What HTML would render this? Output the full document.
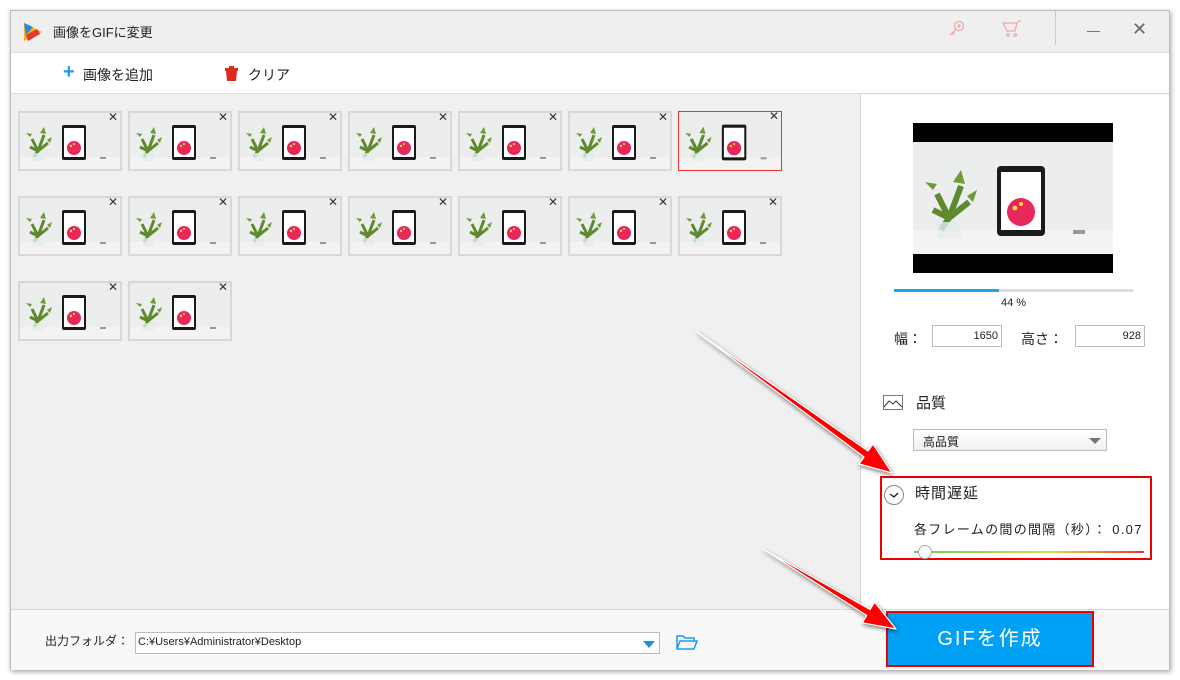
<!DOCTYPE html>
<html><head><meta charset="utf-8"><style>
*{margin:0;padding:0;box-sizing:border-box}
body{width:1180px;height:680px;background:#fff;position:relative;overflow:hidden;font-family:"Liberation Sans","Noto Sans CJK JP",sans-serif;color:#222}
.win{position:absolute;left:10px;top:10px;width:1160px;height:660px;background:#f0f0f0;border:1px solid #bbb;box-shadow:1px 2px 5px rgba(0,0,0,.35)}
.abs{position:absolute}
.title{left:0;top:0;width:1158px;height:42px;background:#efefef;border-bottom:1px solid #dcdcdc}
.tool{left:0;top:42px;width:1158px;height:41px;background:#fff;border-bottom:1px solid #dcdcdc}
.right{left:849px;top:84px;width:309px;height:514px;background:#fff;border-left:1px solid #d6d6d6}
.bottom{left:0;top:598px;width:1158px;height:61px;background:#f8f8f8;border-top:1px solid #d8d8d8}
.th{position:absolute;width:104px;height:60px;border:2px solid #d8d8d8;background:#eee}
.th.sel{border:1px solid #e33}
.th svg{position:absolute;left:0;top:0}
.th .x{position:absolute;right:2px;top:-3px;font-size:12px;color:#333}
input{font-family:inherit}
</style></head><body>
<svg width="0" height="0" style="position:absolute"><defs>
<symbol id="pic" viewBox="0 0 100 56">
<rect width="100" height="56" fill="#eceded"/><rect y="44" width="100" height="12" fill="#f3f3f3"/>
<path d="M14 44 L18 38 M18 38 L12 26 M18 38 L24 22 M18 38 L28 30 M18 38 L10 34" stroke="#5c8a2c" stroke-width="3"/>
<path d="M20 20 l4 -6 l2 7z M10 24 l-4 -4 l6 1z M27 27 l5 -3 l-2 6z" fill="#6e9b35"/>
<rect x="12" y="40" width="12" height="8" fill="#e4ecea" opacity=".8"/>
<rect x="42" y="12" width="24" height="35" rx="2" fill="#1a1a1a"/><rect x="44" y="15" width="20" height="29" fill="#fff"/>
<circle cx="54" cy="35" r="7" fill="#e8285c"/><circle cx="51" cy="33" r="1.2" fill="#fd3"/><circle cx="54" cy="31" r="1" fill="#fd3"/>
<rect x="80" y="44" width="6" height="2" fill="#999"/>
</symbol></defs></svg>

<div class="win">
 <div class="abs title">
  <svg class="abs" style="left:11px;top:10px" width="22" height="22" viewBox="0 0 22 22"><path d="M2 2 L20 11 L2 20z" fill="#f6b21a"/><path d="M2 2 L11 6 L4 14z" fill="#2a8be0"/><path d="M4 14 L15 8 L18 13 L6 20z" fill="#e53b2e"/></svg>
  <div class="abs" style="left:42px;top:11px;font-size:13px">画像をGIFに変更</div>
  <svg class="abs" style="left:937px;top:9px" width="18" height="18" viewBox="0 0 18 18" fill="none" stroke="#f0a8a8" stroke-width="1.2"><circle cx="11" cy="6" r="4.5"/><circle cx="11" cy="6" r="1"/><path d="M8 9 L2 15 M4 13 l2 2 M5 12 l1.5 1.5"/></svg>
  <svg class="abs" style="left:991px;top:9px" width="20" height="18" viewBox="0 0 20 18" fill="none" stroke="#f0a8a8" stroke-width="1.2"><path d="M1 3 H15 L13 11 H5 Z M15 3 L17 1 H19"/><circle cx="6" cy="15" r="1.3"/><circle cx="13" cy="15" r="1.3"/></svg>
  <div class="abs" style="left:1044px;top:0;width:1px;height:34px;background:#ccc"></div>
  <div class="abs" style="left:1076px;top:20px;width:13px;height:1px;background:#777"></div>
  <div class="abs" style="left:1121px;top:8px;font-size:18px;color:#666">✕</div>
 </div>
 <div class="abs tool">
  <div class="abs" style="left:52px;top:8px;font-size:20px;color:#1a9af0;font-weight:bold">+</div>
  <div class="abs" style="left:72px;top:12px;font-size:14px">画像を追加</div>
  <svg class="abs" style="left:214px;top:13px" width="13" height="15" viewBox="0 0 13 15"><rect x="0" y="2" width="13" height="3" fill="#e0281e"/><rect x="4" y="0" width="5" height="3" fill="#e0281e"/><path d="M1 5 H12 L11 15 H2Z" fill="#e0281e"/></svg>
  <div class="abs" style="left:237px;top:12px;font-size:14px">クリア</div>
 </div>
 <div class="abs" style="left:0;top:84px;width:849px;height:514px">
  <div class="th" style="left:7px;top:16px"><svg width="100" height="56"><use href="#pic"/></svg><span class="x">✕</span></div>
  <div class="th" style="left:117px;top:16px"><svg width="100" height="56"><use href="#pic"/></svg><span class="x">✕</span></div>
  <div class="th" style="left:227px;top:16px"><svg width="100" height="56"><use href="#pic"/></svg><span class="x">✕</span></div>
  <div class="th" style="left:337px;top:16px"><svg width="100" height="56"><use href="#pic"/></svg><span class="x">✕</span></div>
  <div class="th" style="left:447px;top:16px"><svg width="100" height="56"><use href="#pic"/></svg><span class="x">✕</span></div>
  <div class="th" style="left:557px;top:16px"><svg width="100" height="56"><use href="#pic"/></svg><span class="x">✕</span></div>
  <div class="th sel" style="left:667px;top:16px"><svg width="102" height="58"><use href="#pic"/></svg><span class="x">✕</span></div>
  <div class="th" style="left:7px;top:101px"><svg width="100" height="56"><use href="#pic"/></svg><span class="x">✕</span></div>
  <div class="th" style="left:117px;top:101px"><svg width="100" height="56"><use href="#pic"/></svg><span class="x">✕</span></div>
  <div class="th" style="left:227px;top:101px"><svg width="100" height="56"><use href="#pic"/></svg><span class="x">✕</span></div>
  <div class="th" style="left:337px;top:101px"><svg width="100" height="56"><use href="#pic"/></svg><span class="x">✕</span></div>
  <div class="th" style="left:447px;top:101px"><svg width="100" height="56"><use href="#pic"/></svg><span class="x">✕</span></div>
  <div class="th" style="left:557px;top:101px"><svg width="100" height="56"><use href="#pic"/></svg><span class="x">✕</span></div>
  <div class="th" style="left:667px;top:101px"><svg width="100" height="56"><use href="#pic"/></svg><span class="x">✕</span></div>
  <div class="th" style="left:7px;top:186px"><svg width="100" height="56"><use href="#pic"/></svg><span class="x">✕</span></div>
  <div class="th" style="left:117px;top:186px"><svg width="100" height="56"><use href="#pic"/></svg><span class="x">✕</span></div>
 </div>
 <div class="abs right">
  <div class="abs" style="left:52px;top:28px;width:200px;height:150px;background:#000"></div>
  <svg class="abs" style="left:52px;top:47px" width="200" height="112" viewBox="0 0 100 56" preserveAspectRatio="none"><use href="#pic"/></svg>
  <div class="abs" style="left:33px;top:194px;width:240px;height:3px;background:#ddd;border-radius:2px"></div>
  <div class="abs" style="left:33px;top:194px;width:105px;height:3px;background:#14a7ef"></div>
  <div class="abs" style="left:140px;top:202px;font-size:11px">44 %</div>
  <div class="abs" style="left:33px;top:234px;font-size:14px">幅：</div>
  <div class="abs" style="left:71px;top:230px;width:70px;height:22px;border:1px solid #bbb;font-size:11px;text-align:right;padding:4px 3px">1650</div>
  <div class="abs" style="left:160px;top:234px;font-size:14px">高さ：</div>
  <div class="abs" style="left:214px;top:230px;width:70px;height:22px;border:1px solid #bbb;font-size:11px;text-align:right;padding:4px 3px">928</div>
  <svg class="abs" style="left:22px;top:300px" width="20" height="15" viewBox="0 0 20 15" fill="none" stroke="#777"><rect x=".5" y=".5" width="19" height="14"/><path d="M1 12 L6 6 L10 9 L13 6 L19 12" stroke="#333"/></svg>
  <div class="abs" style="left:55px;top:297px;font-size:15px">品質</div>
  <div class="abs" style="left:52px;top:334px;width:194px;height:22px;border:1px solid #bbb;background:linear-gradient(#fff,#f0f0f0);font-size:12px;padding:3px 9px">高品質</div>
  <div class="abs" style="left:228px;top:343px;border-left:6px solid transparent;border-right:6px solid transparent;border-top:6px solid #777"></div>
  <div class="abs" style="left:19px;top:381px;width:272px;height:84px;border:2px solid #e00"></div>
  <div class="abs" style="left:23px;top:390px;width:20px;height:20px;border:1px solid #888;border-radius:50%"></div>
  <svg class="abs" style="left:28px;top:396px" width="10" height="8"><path d="M1 3 L5 6 L9 2" stroke="#222" fill="none" stroke-width="1.3"/></svg>
  <div class="abs" style="left:54px;top:387px;font-size:15px;letter-spacing:1px">時間遅延</div>
  <div class="abs" style="left:53px;top:424px;font-size:13px;white-space:nowrap;letter-spacing:1.3px">各フレームの間の間隔（秒）： 0.07</div>
  <div class="abs" style="left:53px;top:456px;width:230px;height:2px;background:linear-gradient(90deg,#6c6,#dd4 60%,#e33)"></div>
  <div class="abs" style="left:57px;top:450px;width:14px;height:14px;border:1px solid #aaa;border-radius:50%;background:#fff"></div>
 </div>
 <div class="abs bottom">
  <div class="abs" style="left:34px;top:22px;font-size:12px">出力フォルダ：</div>
  <div class="abs" style="left:124px;top:22px;width:525px;height:22px;border:1px solid #bbb;background:#fff;font-size:11px;padding:3px 2px">C:¥Users¥Administrator¥Desktop</div>
  <div class="abs" style="left:632px;top:31px;border-left:6px solid transparent;border-right:6px solid transparent;border-top:7px solid #1a8de6"></div>
  <svg class="abs" style="left:665px;top:24px" width="22" height="17" viewBox="0 0 22 17" fill="none" stroke="#1a9af0" stroke-width="1.5"><path d="M1 15 V2 H7 L9 4 H18 V7 M1 15 L4 7 H21 L18 15Z"/></svg>
  <div class="abs" style="left:875px;top:1px;width:208px;height:56px;background:#00a0f5;border:2px solid #e00;color:#fff;font-size:20px;text-align:center;line-height:52px;letter-spacing:2px">GIFを作成</div>
 </div>
</div>
<svg class="abs" style="left:0;top:0" width="1180" height="680">
 <g fill="#f00" stroke="#fff" stroke-width="1.2" stroke-linejoin="round" style="filter:drop-shadow(1px 2px 2px rgba(0,0,0,.5))">
  <polygon points="697,332 868,451 873,444 892,473 859,464 864,457"/>
  <polygon points="763,549 870,609.5 874.7,602.2 896,629 862.3,622.8 866.7,615.5"/>
 </g>
</svg>
</body></html>
